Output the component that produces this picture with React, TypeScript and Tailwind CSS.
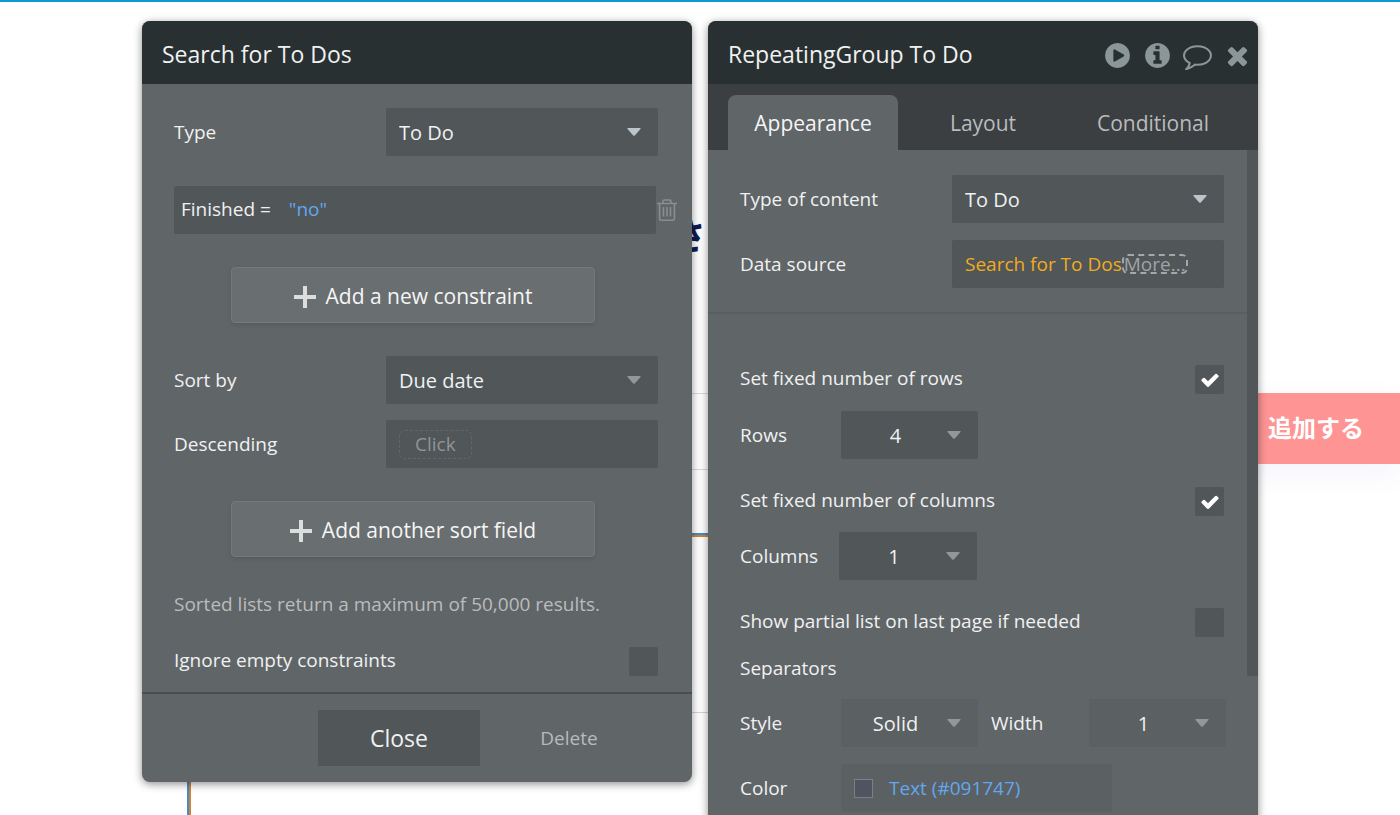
import React, { useState } from 'react';

const ICONS = {
  play: 'M896 128q209 0 385.5 103t279.5 279.5 103 385.5-103 385.5-279.5 279.5-385.5 103-385.5-103-279.5-279.5-103-385.5 103-385.5 279.5-279.5 385.5-103zm384 823q32-18 32-55t-32-55l-544-320q-31-19-64-1-32 19-32 56v640q0 37 32 56 16 8 32 8 17 0 32-9z',
  info: 'M1152 1376v-160q0-14-9-23t-23-9h-96v-512q0-14-9-23t-23-9h-320q-14 0-23 9t-9 23v160q0 14 9 23t23 9h96v320h-96q-14 0-23 9t-9 23v160q0 14 9 23t23 9h448q14 0 23-9t9-23zm-128-896v-160q0-14-9-23t-23-9h-192q-14 0-23 9t-9 23v160q0 14 9 23t23 9h192q14 0 23-9t9-23zm640 416q0 209-103 385.5t-279.5 279.5-385.5 103-385.5-103-279.5-279.5-103-385.5 103-385.5 279.5-279.5 385.5-103 385.5 103 279.5 279.5 103 385.5z',
  comment:
    'M896 384q-204 0-381.5 69.5t-282 187.5-104.5 255q0 112 71.5 213.5t201.5 175.5l87 50-27 96q-24 91-70 172 152-63 275-171l43-38 57 6q69 8 130 8 204 0 381.5-69.5t282-187.5 104.5-255-104.5-255-282-187.5-381.5-69.5zm896 512q0 174-120 321.5t-326 233-450 85.5q-70 0-145-8-198 175-460 242-49 14-114 22h-5q-15 0-27-10.5t-16-27.5v-1q-3-4-.5-12t2-10 4.5-9.5l6-9 7-8.5 8-9q7-8 31-34.5t34.5-38 31-39.5 32.5-51 27-59 26-76q-157-89-247.5-220t-90.5-281q0-174 120-321.5t326-233 450-85.5 450 85.5 326 233 120 321.5z',
  close:
    'M1490 1322q0 40-28 68l-136 136q-28 28-68 28t-68-28l-294-294-294 294q-28 28-68 28t-68-28l-136-136q-28-28-28-68t28-68l294-294-294-294q-28-28-28-68t28-68l136-136q28-28 68-28t68 28l294 294 294-294q28-28 68-28t68 28l136 136q28 28 28 68t-28 68l-294 294 294 294q28 28 28 68z',
  check:
    'M1671 566q0 40-28 68l-724 724-136 136q-28 28-68 28t-68-28l-136-136-362-362q-28-28-28-68t28-68l136-136q28-28 68-28t68 28l294 295 656-657q28-28 68-28t68 28l136 136q28 28 28 68z',
};

function HeaderButton({ icon, label }: { icon: keyof typeof ICONS; label: string }) {
  return (
    <button aria-label={label} className="text-[#8b9698]">
      <svg viewBox="0 0 1792 1792" className="size-[29px]" fill="currentColor">
        <path d={ICONS[icon]} />
      </svg>
    </button>
  );
}

function Select({ id, options, className = '', selectClass = '', arrow = 'text-[#939799]' }: any) {
  return (
    <div className={`grid h-12 items-center rounded-xs ${className}`}>
      <select
        id={id}
        className={`col-start-1 row-start-1 h-12 w-full appearance-none bg-transparent pt-0.5 text-xl outline-none ${selectClass}`}
      >
        {options.map((o: string) => (
          <option key={o}>{o}</option>
        ))}
      </select>
      <svg
        viewBox="0 0 14 8"
        className={`pointer-events-none col-start-1 row-start-1 mr-[17px] h-2 w-3.5 justify-self-end ${arrow}`}
        fill="currentColor"
      >
        <path d="M1 0h12q1 .3.5 1L8 7.2q-1 1-2 0L.5 1Q0 .3 1 0z" />
      </svg>
    </div>
  );
}

function CheckRow({ id, label, defaultChecked = false }: any) {
  const [checked, setChecked] = useState(defaultChecked);

  return (
    <div className="flex h-[29px] items-center justify-between">
      <label htmlFor={id} className="pb-0.5">
        {label}
      </label>
      <span className="grid size-[29px] place-items-center rounded-xs bg-[#515659]">
        <input
          id={id}
          type="checkbox"
          checked={checked}
          onChange={(e) => setChecked(e.target.checked)}
          className="col-start-1 row-start-1 size-full appearance-none"
        />
        {checked && (
          <svg
            viewBox="0 0 1792 1792"
            className="pointer-events-none col-start-1 row-start-1 size-5 text-white"
            fill="currentColor"
          >
            <path d={ICONS.check} />
          </svg>
        )}
      </span>
    </div>
  );
}

function AddButton({ children }: { children: React.ReactNode }) {
  return (
    <button className="ml-[57px] flex h-14 w-[364px] items-center justify-center gap-2.5 rounded-sm border border-[#75797b] bg-[#696e70] pt-[3px] text-[21px] text-[#f5f5f5] shadow-[0_2px_4px_rgba(0,0,0,0.1)]">
      <svg viewBox="0 0 22 22" className="size-[22px] text-[#dcdddd]" fill="currentColor">
        <path d="M9 0h4v9h9v4h-9v9H9v-9H0V9h9z" />
      </svg>
      {children}
    </button>
  );
}

function SearchPanel() {
  return (
    <section className="w-[550px] overflow-hidden rounded-lg bg-[#606568] shadow-[0_2px_8px_rgba(0,0,0,0.45)]">
      <header className="flex h-[63px] items-center bg-[#293032] px-5 pt-[3px] text-[23px]">
        <h2>Search for To Dos</h2>
      </header>

      <div className="pt-6 pr-[34px] pb-4 pl-8">
        <div className="flex items-center justify-between">
          <label htmlFor="type">Type</label>
          <Select
            id="type"
            options={['To Do', 'User']}
            className="w-[272px] bg-[#515659]"
            selectClass="px-[13px]"
            arrow="text-[#bcc5ca]"
          />
        </div>

        <div className="mt-[30px] -mr-[19px] flex items-center">
          <div className="flex h-12 flex-1 items-center gap-[18px] rounded-xs bg-[#515659] px-[7px] pb-0.5">
            <button>Finished =</button>
            <button className="text-[#62a7f0]">"no"</button>
          </div>
          <button aria-label="Delete constraint" className="ml-px text-[#8a8e90]">
            <svg viewBox="0 0 20 22" className="h-[22px] w-5" fill="none" stroke="currentColor" strokeWidth="1.6">
              <path d="M0 4.5h20M6 4.5V2.5Q6 1 7.5 1h5Q14 1 14 2.5v2M2.6 4.5v15q0 1.7 1.6 1.7h11.6q1.6 0 1.6-1.7v-15M6.5 8v9.5M10 8v9.5M13.5 8v9.5" />
            </svg>
          </button>
        </div>

        <div className="mt-[33px]">
          <AddButton>Add a new constraint</AddButton>
        </div>

        <div className="mt-[33px] flex items-center justify-between">
          <label htmlFor="sort">Sort by</label>
          <Select
            id="sort"
            options={['Due date', 'Created Date']}
            className="w-[272px] bg-[#515659]"
            selectClass="px-[13px]"
          />
        </div>

        <div className="mt-4 flex items-center justify-between">
          <span>Descending</span>
          <div className="flex h-12 w-[272px] items-center rounded-xs bg-[#515659] px-[13px]">
            <button className="h-[29px] rounded-md border border-dashed border-[#63676a] px-[15px] leading-[27px] text-[#909496]">
              Click
            </button>
          </div>
        </div>

        <div className="mt-[33px]">
          <AddButton>Add another sort field</AddButton>
        </div>

        <p className="mt-[33px] mb-7 leading-[29px] text-[#babcbd]">
          Sorted lists return a maximum of 50,000 results.
        </p>
        <CheckRow id="ignore" label="Ignore empty constraints" />
      </div>

      <footer className="flex gap-2 border-t-2 border-[#4b4c4c] py-4 pl-[176px]">
        <button className="h-14 w-[162px] bg-[#515659] text-[23px]">Close</button>
        <button className="h-14 w-[162px] text-[#b8babb]">Delete</button>
      </footer>
    </section>
  );
}

function PropertyPanel() {
  const [tab, setTab] = useState('Appearance');

  return (
    <section className="w-[550px] overflow-hidden rounded-lg bg-[#606568] shadow-[0_2px_8px_rgba(0,0,0,0.45)]">
      <header className="flex h-[63px] items-center justify-between bg-[#293032] pt-[3px] pr-1.5 pl-5 text-[23px]">
        <h2>RepeatingGroup To Do</h2>
        <div className="flex gap-[11px] pt-0.5">
          <HeaderButton icon="play" label="Preview" />
          <HeaderButton icon="info" label="Reference" />
          <HeaderButton icon="comment" label="Comment" />
          <HeaderButton icon="close" label="Close" />
        </div>
      </header>

      <nav className="flex bg-[#3b3f42] px-5 pt-[11px] text-[21px]">
        {['Appearance', 'Layout', 'Conditional'].map((name) => (
          <button
            key={name}
            onClick={() => setTab(name)}
            className={`h-[55px] flex-1 rounded-t-lg pt-0.5 ${
              tab === name ? 'bg-[#606568] text-[#f5f5f5]' : 'text-[#b9bbbc]'
            }`}
          >
            {name}
          </button>
        ))}
      </nav>

      <div className="flex items-start">
        <div className="flex-1">
          <div className="flex flex-col gap-[17px] border-b-2 border-[#595e61] pt-[25px] pr-[23px] pb-6 pl-8">
            <div className="flex items-center justify-between">
              <label htmlFor="content">Type of content</label>
              <Select
                id="content"
                options={['To Do', 'User']}
                className="w-[272px] bg-[#515659]"
                selectClass="px-[13px]"
                arrow="text-[#bcc5ca]"
              />
            </div>
            <div className="flex items-center justify-between">
              <span>Data source</span>
              <div className="flex h-12 w-[272px] items-center rounded-xs bg-[#515659] px-[13px]">
                <button className="text-[#f2ab1d]">Search for To Dos</button>
                <button className="h-5 rounded-md border-2 border-dashed border-[#a5a8a9] leading-4 text-[#a0a3a5]">
                  More...
                </button>
              </div>
            </div>
          </div>

          <div className="pt-[51px] pr-[23px] pb-4 pl-8">
            <CheckRow id="fixed-rows" label="Set fixed number of rows" defaultChecked />
            <div className="mt-[17px] flex items-center">
              <label htmlFor="rows" className="w-[101px]">
                Rows
              </label>
              <Select
                id="rows"
                options={['4', '5', '6']}
                className="w-[137px] bg-[#515659]"
                selectClass="pr-7 text-center"
              />
            </div>

            <div className="mt-7">
              <CheckRow id="fixed-cols" label="Set fixed number of columns" defaultChecked />
            </div>
            <div className="mt-4 flex items-center">
              <label htmlFor="columns" className="w-[99px]">
                Columns
              </label>
              <Select
                id="columns"
                options={['1', '2', '3']}
                className="w-[138px] bg-[#515659]"
                selectClass="pr-7 text-center"
              />
            </div>

            <div className="mt-7">
              <CheckRow id="partial" label="Show partial list on last page if needed" />
            </div>

            <h3 className="mt-4 leading-[30px]">Separators</h3>

            <div className="-mr-0.5 mt-4 flex items-center">
              <label htmlFor="style" className="w-[101px]">
                Style
              </label>
              <Select
                id="style"
                options={['Solid', 'Dashed', 'Dotted', 'None']}
                className="w-[137px] bg-[#5b6062]"
                selectClass="pr-7 text-center"
              />
              <label htmlFor="width" className="ml-[13px] flex-1">
                Width
              </label>
              <Select
                id="width"
                options={['1', '2', '3']}
                className="w-[137px] bg-[#5b6062]"
                selectClass="pr-7 text-center"
              />
            </div>

            <div className="mt-[17px] flex items-center">
              <span className="w-[101px]">Color</span>
              <button className="flex h-12 w-[271px] items-center gap-4 rounded-xs bg-[#5b6062] px-[13px] text-[#62a7f0]">
                <span className="size-[19px] border border-[#7a7f8a] bg-[#4e5560]" />
                Text (#091747)
              </button>
            </div>
          </div>
        </div>
        <div className="h-[526px] w-[11px] bg-[#515659]" />
      </div>
    </section>
  );
}

export default function App() {
  return (
    <div className="relative h-screen overflow-hidden border-t-2 border-[#0a9bd0] bg-white font-['Open_Sans','Noto_Sans_CJK_JP',sans-serif] text-[19px] text-[#f0f1f1]">
      {/* the edited page, below the floating editors */}
      <div className="absolute inset-0">
        <div className="relative mx-auto h-full w-[1116px]">
          <p className="absolute top-[210px] left-[528px] text-[36px] leading-[50px] font-bold text-[#0f1b50]">さ</p>
          <div className="absolute top-[391px] left-6 h-[77px] w-[1000px] border border-[#dadada]" />
          <div className="absolute top-[531px] left-[45px] h-[400px] w-[1000px] border-2 border-[#3b8ed6]">
            <div className="h-full border-2 border-r-0 border-[#d9822b]" />
          </div>
          <div className="absolute top-[710px] left-[60px] h-px w-[970px] bg-[#d4d4d4]" />
        </div>
        <button className="absolute top-[391px] right-0 h-[71px] w-[168px] bg-[#ff9494] pb-0.5 text-2xl font-bold text-white shadow-[0_10px_30px_rgba(80,80,200,0.06)]">
          追加する
        </button>
      </div>

      <main className="relative flex items-start justify-center gap-4 pt-[19px]">
        <SearchPanel />
        <PropertyPanel />
      </main>
    </div>
  );
}
